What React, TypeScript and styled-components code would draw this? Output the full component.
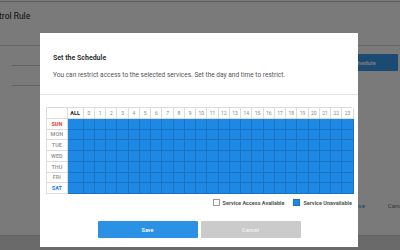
import React from "react";
import styled, { createGlobalStyle } from "styled-components";

const HOURS = Array.from({ length: 24 }, (_, i) => i);
const DAYS = ["SUN", "MON", "TUE", "WED", "THU", "FRI", "SAT"];

const GlobalStyle = createGlobalStyle`
  html, body {
    margin: 0;
    padding: 0;
    width: 400px;
    height: 250px;
    overflow: hidden;
    font-family: Roboto, "Liberation Sans", sans-serif;
  }
`;

const Page = styled.div`
  position: relative;
  width: 400px;
  height: 250px;
  background: #fff;
  display: flex;
  flex-direction: column;
  overflow: hidden;
`;

const TopBar = styled.div`
  height: 1px;
  border-bottom: 1px solid #c4c4c4;
`;

const PageHeader = styled.div`
  height: 44px;
  border-bottom: 1px solid #d6d6d6;
  display: flex;
  align-items: flex-start;
  padding-top: 9px;
  box-sizing: border-box;
`;

const PageTitle = styled.h1`
  margin: 0 0 0 -16px;
  font-size: 8.5px;
  font-weight: 400;
  color: #222;
`;

const PageBody = styled.div`
  flex: 1;
  display: flex;
  flex-direction: column;
`;

const TopRow = styled.div`
  display: flex;
`;

const FormColumn = styled.div`
  flex: 1;
  padding: 0 0 0 12px;
  display: flex;
  flex-direction: column;
`;

const FormRow = styled.div`
  height: 19px;
  border-bottom: 1px solid #d0d0d0;
`;

const ActionColumn = styled.div`
  width: 88px;
  margin-right: 2px;
  padding-top: 8px;
  display: flex;
  flex-direction: column;
  align-items: stretch;
`;

const PageButton = styled.button`
  height: 17px;
  border: none;
  border-radius: 1px;
  background: #3a9bf0;
  color: #fff;
  font-family: inherit;
  font-size: 6px;
  font-weight: 700;
  padding: 0 0 0 8px;
`;

const PageActions = styled.div`
  display: flex;
  gap: 23px;
  padding-left: 352px;
  margin-top: 113px;
  height: 12px;
  align-items: center;
  white-space: nowrap;
`;

const TextButton = styled.span<{ $muted?: boolean }>`
  font-size: 6px;
  color: ${(p) => (p.$muted ? "#777" : "#2f8fe6")};
`;

const Footer = styled.div`
  height: 14px;
  margin-top: auto;
  background: #dedede;
  border-top: 1px solid #cfcfcf;
`;

const Overlay = styled.div`
  position: absolute;
  inset: 0;
  background: rgba(0, 0, 0, 0.52);
`;

const Modal = styled.div`
  position: absolute;
  left: 40px;
  top: 33px;
  width: 318px;
  height: 214px;
  background: #fff;
  display: flex;
  flex-direction: column;
`;

const ModalHeader = styled.div`
  height: 62px;
  padding: 21px 13px 0;
  box-sizing: border-box;
  border-bottom: 1px solid #e2e2e2;
`;

const ModalTitle = styled.div`
  font-size: 7px;
  font-weight: 700;
  color: #333;
  line-height: 9px;
`;

const ModalText = styled.div`
  margin-top: 8px;
  font-size: 6.55px;
  color: #555;
  line-height: 9px;
  white-space: nowrap;
`;

const ModalBody = styled.div`
  padding: 12px 6px 0;
  display: flex;
  flex-direction: column;
`;

const Grid = styled.div`
  display: grid;
  grid-template-columns: 20.7px 16px repeat(24, 11.25px);
  grid-auto-rows: 10.75px;
  border-top: 1px solid #dcdcdc;
  border-left: 1px solid #dcdcdc;
  box-sizing: border-box;
`;

const HeadCell = styled.div<{ $strong?: boolean }>`
  border-right: 1px solid #dcdcdc;
  border-bottom: 1px solid #dcdcdc;
  display: flex;
  align-items: center;
  justify-content: center;
  font-size: ${(p) => (p.$strong ? "5.5px" : "5px")};
  font-weight: ${(p) => (p.$strong ? 700 : 400)};
  color: ${(p) => (p.$strong ? "#222" : "#888")};
  background: #fff;
`;

const dayColor = (d: string) =>
  d === "SUN" ? "#e53935" : d === "SAT" ? "#1e7fe0" : "#a0a0a0";

const DayCell = styled.div<{ $day: string }>`
  border-right: 1px solid #dcdcdc;
  border-bottom: 1px solid #dcdcdc;
  display: flex;
  align-items: center;
  justify-content: center;
  font-size: 5.5px;
  font-weight: 700;
  color: ${(p) => dayColor(p.$day)};
  background: #fff;
`;

const SlotCell = styled.div<{ $blocked: boolean }>`
  background: ${(p) => (p.$blocked ? "#1e88e5" : "#fff")};
  border-right: 1px solid ${(p) => (p.$blocked ? "#1a72c4" : "#dcdcdc")};
  border-bottom: 1px solid ${(p) => (p.$blocked ? "#1a72c4" : "#dcdcdc")};
`;

const Legend = styled.div`
  display: flex;
  justify-content: flex-end;
  align-items: center;
  gap: 9px;
  height: 15px;
  margin-top: 1px;
`;

const LegendItem = styled.div`
  display: flex;
  align-items: center;
  gap: 3px;
  font-size: 5.5px;
  font-weight: 700;
  color: #555;
`;

const Swatch = styled.span<{ $filled?: boolean }>`
  width: 5px;
  height: 5px;
  border: 1px solid ${(p) => (p.$filled ? "#1a72c4" : "#9a9a9a")};
  background: ${(p) => (p.$filled ? "#1e88e5" : "#fff")};
`;

const ButtonRow = styled.div`
  display: flex;
  justify-content: center;
  gap: 3px;
  margin-top: 11px;
`;

const ModalButton = styled.button<{ $primary?: boolean }>`
  width: 100px;
  height: 17px;
  border: none;
  border-radius: 1px;
  background: ${(p) => (p.$primary ? "#2a91e4" : "#cbcbcb")};
  color: ${(p) => (p.$primary ? "#fff" : "#f2f2f2")};
  font-family: inherit;
  font-size: 5.5px;
  font-weight: 500;
  cursor: pointer;
`;

const App: React.FC = () => {
  return (
    <>
      <GlobalStyle />
      <Page>
        <TopBar />
        <PageHeader>
          <PageTitle>Control Rule</PageTitle>
        </PageHeader>
        <PageBody>
          <TopRow>
            <FormColumn>
              <FormRow />
              <FormRow />
            </FormColumn>
            <ActionColumn>
              <PageButton>Set Schedule</PageButton>
            </ActionColumn>
          </TopRow>
          <PageActions>
            <TextButton>Save</TextButton>
            <TextButton $muted>Cancel</TextButton>
          </PageActions>
        </PageBody>
        <Footer />
        <Overlay />
        <Modal>
          <ModalHeader>
            <ModalTitle>Set the Schedule</ModalTitle>
            <ModalText>
              You can restrict access to the selected services. Set the day and time to restrict.
            </ModalText>
          </ModalHeader>
          <ModalBody>
            <Grid>
              <HeadCell />
              <HeadCell $strong>ALL</HeadCell>
              {HOURS.map((h) => (
                <HeadCell key={h}>{h}</HeadCell>
              ))}
              {DAYS.map((d) => (
                <React.Fragment key={d}>
                  <DayCell $day={d}>{d}</DayCell>
                  <SlotCell $blocked />
                  {HOURS.map((h) => (
                    <SlotCell key={h} $blocked />
                  ))}
                </React.Fragment>
              ))}
            </Grid>
            <Legend>
              <LegendItem>
                <Swatch />
                Service Access Available
              </LegendItem>
              <LegendItem>
                <Swatch $filled />
                Service Unavailable
              </LegendItem>
            </Legend>
            <ButtonRow>
              <ModalButton $primary>Save</ModalButton>
              <ModalButton>Cancel</ModalButton>
            </ButtonRow>
          </ModalBody>
        </Modal>
      </Page>
    </>
  );
};

export default App;
